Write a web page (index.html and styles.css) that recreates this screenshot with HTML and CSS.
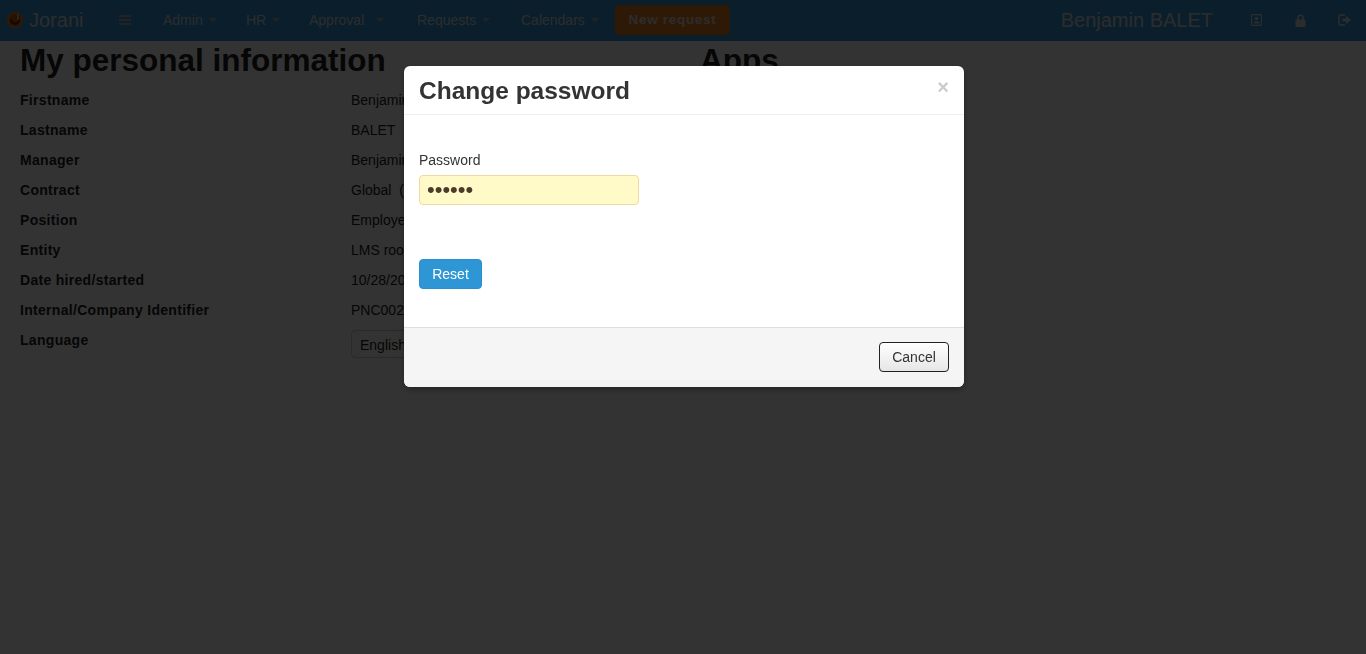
FILE: index.html
```html
<!doctype html>
<html lang="en">
    <head>
        <meta charset="UTF-8" />
        <meta name="viewport" content="width=device-width, initial-scale=1.0" />
        <title>Jorani</title>
        <link rel="stylesheet" href="styles.css">
    </head>
    <body>
        <!-- Top navigation -->
        <nav class="navbar">
            <a class="brand" href="#">
                <svg class="brand-logo" viewBox="0 0 16 16" width="16" height="16">
                    <circle cx="8" cy="8" r="8" fill="#f07a1a" />
                    <circle cx="8" cy="8" r="6" fill="#b85a12" />
                    <path d="M4 7.500a4 4 0 0 0 8 .5" fill="none" stroke="#5e2a06" stroke-width="2" />
                    <path d="M10.800 2v6" fill="none" stroke="#f8d2b0" stroke-width="1.300" />
                </svg>
                Jorani
            </a>
            <a class="nav-icon" href="#">
                <svg viewBox="0 0 12 10" width="12" height="10">
                    <path d="M0 0h12v2H0zM0 4h12v2H0zM0 8h12v2H0z" fill="#b0b0b0" />
                </svg>
            </a>
            <a class="nav-link link-admin" href="#">Admin<span class="caret"></span></a>
            <a class="nav-link link-hr" href="#">HR<span class="caret"></span></a>
            <a class="nav-link link-approval" href="#">Approval<span class="caret caret-wide"></span></a>
            <a class="nav-link link-requests" href="#">Requests<span class="caret"></span></a>
            <a class="nav-link link-calendars" href="#">Calendars<span class="caret"></span></a>
            <a class="btn-new" href="#">New request</a>

            <span class="nav-user">Benjamin BALET</span>
            <a class="nav-tool" href="#">
                <svg viewBox="0 0 11 12" width="11" height="12">
                    <rect x="0.600" y="0.600" width="9.800" height="10.800" rx="0.800" fill="none" stroke="#ddd" stroke-width="1.200" />
                    <circle cx="5.500" cy="4.500" r="1.800" fill="#ddd" />
                    <path d="M2.500 9.500c0-1.600 1.200-2.300 3-2.300s3 .7 3 2.300z" fill="#ddd" />
                </svg>
            </a>
            <a class="nav-tool" href="#">
                <svg viewBox="0 0 11 13" width="11" height="13">
                    <path d="M3 6V3.800a2.500 2.500 0 0 1 5 0V6" fill="none" stroke="#ddd" stroke-width="1.600" />
                    <rect x="0.500" y="5.500" width="10" height="7.500" rx="1" fill="#ddd" />
                </svg>
            </a>
            <a class="nav-tool" href="#">
                <svg viewBox="0 0 13 12" width="13" height="12">
                    <path d="M7 1H1.700a.7.7 0 0 0-.7.700v8.600a.7.7 0 0 0 .7.700H7" fill="none" stroke="#ddd" stroke-width="1.500" />
                    <path d="M4.500 4.500H8V2l5 4-5 4V7.500H4.500z" fill="#ddd" />
                </svg>
            </a>
        </nav>

        <!-- Page content behind the dialog -->
        <div class="page">
            <section class="info">
                <h1>My personal information</h1>
                <div class="info-row"><strong>Firstname</strong><span>Benjamin</span></div>
                <div class="info-row"><strong>Lastname</strong><span>BALET</span></div>
                <div class="info-row"><strong>Manager</strong><span>Benjamin</span></div>
                <div class="info-row"><strong>Contract</strong><span>Global &nbsp;(</span></div>
                <div class="info-row"><strong>Position</strong><span>Employee</span></div>
                <div class="info-row"><strong>Entity</strong><span>LMS root</span></div>
                <div class="info-row"><strong>Date hired/started</strong><span>10/28/2013</span></div>
                <div class="info-row"><strong>Internal/Company Identifier</strong><span>PNC0025</span></div>
                <div class="info-row"><strong>Language</strong><span class="lang-box">English</span></div>
            </section>
            <section class="apps">
                <h1>Apps</h1>
            </section>
        </div>

        <div class="backdrop"></div>

        <!-- Change password dialog -->
        <div class="modal">
            <div class="modal-header">
                <h3>Change password</h3>
                <span class="close">&times;</span>
            </div>
            <form class="modal-body">
                <label for="password">Password</label>
                <input type="password" id="password" name="password" value="secret" />
                <button type="button" class="btn-reset">Reset</button>
            </form>
            <div class="modal-footer">
                <button type="button" class="btn-cancel">Cancel</button>
            </div>
        </div>
    </body>
</html>
```
FILE: styles.css
```css
/* Basic styling */
body {
    font-family: "Liberation Sans", Arial, sans-serif;
    font-size: 14px;
    line-height: 20px;
    color: #222;
    background-color: #fff;
    margin: 0;
    height: 654px;
    overflow: hidden;
}
a {
    color: #ddd;
    text-decoration: none;
}

/* Navbar */
.navbar {
    display: flex;
    align-items: center;
    height: 41px;
    background-color: #3498db;
    box-sizing: border-box;
    padding-left: 7px;
    padding-bottom: 1px;
}
.brand {
    display: flex;
    align-items: center;
    gap: 6px;
    font-size: 20px;
    width: 112px;
}
.nav-icon {
    display: flex;
    width: 44px;
}
.nav-link {
    display: flex;
    align-items: center;
}
.link-admin { width: 83px; }
.link-hr { width: 63px; }
.link-approval { width: 108px; }
.link-requests { width: 104px; }
.link-calendars { width: 94px; }
.caret {
    width: 0;
    height: 0;
    margin-left: 6px;
    border-top: 4px solid #aaa;
    border-left: 4px solid transparent;
    border-right: 4px solid transparent;
}
.caret-wide {
    margin-left: 12px;
}
.btn-new {
    width: 115px;
    height: 30px;
    line-height: 30px;
    text-align: center;
    font-size: 13.5px;
    font-weight: bold;
    letter-spacing: 0.7px;
    background-color: #e67e22;
    border-radius: 4px;
}
.nav-user {
    margin-left: auto;
    margin-right: 36px;
    font-size: 20px;
    color: #ddd;
}
.nav-tool {
    display: flex;
    justify-content: center;
    width: 14px;
    margin-right: 30px;
}
.nav-tool:last-child {
    margin-right: 15px;
}

/* Page behind the dialog */
.page {
    display: flex;
    padding-left: 20px;
}
.info {
    width: 680px;
}
h1 {
    margin: 0 0 11px;
    font-size: 31.5px;
    line-height: 38px;
    color: #222;
}
.info-row {
    display: flex;
    height: 30px;
    align-items: flex-start;
}
.info-row strong {
    width: 331px;
    letter-spacing: 0.3px;
}
.lang-box {
    width: 220px;
    height: 28px;
    line-height: 28px;
    box-sizing: border-box;
    padding-left: 8px;
    border: 1px solid #ccc;
    border-radius: 4px;
}

/* Dialog */
.backdrop {
    position: fixed;
    top: 0;
    left: 0;
    width: 100%;
    height: 100%;
    background-color: rgba(0, 0, 0, 0.8);
}
.modal {
    position: fixed;
    top: 66px;
    left: 404px;
    width: 560px;
    background-color: #fff;
    border-radius: 6px;
    box-shadow: 0 3px 7px rgba(0, 0, 0, 0.3);
    overflow: hidden;
}
.modal-header {
    display: flex;
    justify-content: space-between;
    height: 48px;
    padding: 0 15px;
    border-bottom: 1px solid #eee;
}
.modal-header h3 {
    margin: 5px 0 0;
    font-size: 24.5px;
    line-height: 40px;
    color: #333;
}
.close {
    font-size: 20px;
    font-weight: bold;
    line-height: 42px;
    color: #ccc;
}
.modal-body {
    display: flex;
    flex-direction: column;
    align-items: flex-start;
    height: 212px;
    box-sizing: border-box;
    padding: 35px 15px 0;
}
.modal-body label {
    color: #333;
    margin-bottom: 5px;
}
.modal-body input {
    width: 220px;
    height: 30px;
    box-sizing: border-box;
    padding: 0 7px;
    font-family: inherit;
    font-size: 22px;
    color: #4a3b2a;
    background-color: #fffac8;
    border: 1px solid #f0d9a0;
    border-radius: 4px;
    outline: none;
}
.btn-reset {
    width: 63px;
    height: 30px;
    margin-top: 54px;
    padding: 0;
    font-family: inherit;
    font-size: 14px;
    color: #fff;
    background-color: #2e96d4;
    border: 1px solid #2a8fcf;
    border-radius: 4px;
}
.modal-footer {
    display: flex;
    justify-content: flex-end;
    height: 60px;
    box-sizing: border-box;
    padding: 14px 15px 0;
    background-color: #f5f5f5;
    border-top: 1px solid #ddd;
}
.btn-cancel {
    width: 70px;
    height: 30px;
    padding: 0;
    font-family: inherit;
    font-size: 14px;
    color: #333;
    background-image: linear-gradient(to bottom, #fff, #e6e6e6);
    border: 1px solid #222;
    border-radius: 4px;
}
```
